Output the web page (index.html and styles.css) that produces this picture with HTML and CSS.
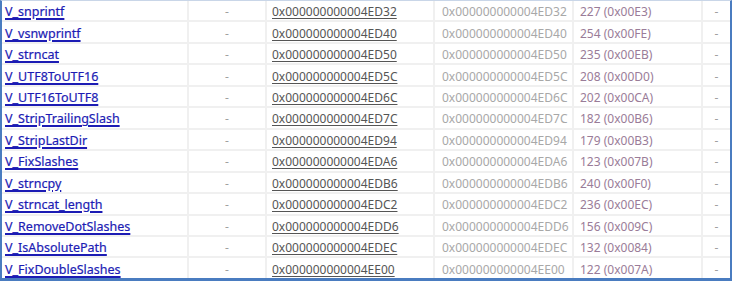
FILE: index.html
```html
<!DOCTYPE html>
<html>
<head>
<meta charset="utf-8">
<link rel="stylesheet" href="styles.css">
</head>
<body>
<div class="frame">
<table class="grid">
<colgroup><col class="c1"><col class="c2"><col class="c3"><col class="c4"><col class="c5"><col class="c6"></colgroup>
<tbody>
<tr><td><a class="fn">V_snprintf</a></td><td class="dash">-</td><td><a class="addr">0x000000000004ED32</a></td><td class="off">0x000000000004ED32</td><td class="size">227 (0x00E3)</td><td class="dash">-</td></tr>
<tr><td><a class="fn">V_vsnwprintf</a></td><td class="dash">-</td><td><a class="addr">0x000000000004ED40</a></td><td class="off">0x000000000004ED40</td><td class="size">254 (0x00FE)</td><td class="dash">-</td></tr>
<tr><td><a class="fn">V_strncat</a></td><td class="dash">-</td><td><a class="addr">0x000000000004ED50</a></td><td class="off">0x000000000004ED50</td><td class="size">235 (0x00EB)</td><td class="dash">-</td></tr>
<tr><td><a class="fn">V_UTF8ToUTF16</a></td><td class="dash">-</td><td><a class="addr">0x000000000004ED5C</a></td><td class="off">0x000000000004ED5C</td><td class="size">208 (0x00D0)</td><td class="dash">-</td></tr>
<tr><td><a class="fn">V_UTF16ToUTF8</a></td><td class="dash">-</td><td><a class="addr">0x000000000004ED6C</a></td><td class="off">0x000000000004ED6C</td><td class="size">202 (0x00CA)</td><td class="dash">-</td></tr>
<tr><td><a class="fn">V_StripTrailingSlash</a></td><td class="dash">-</td><td><a class="addr">0x000000000004ED7C</a></td><td class="off">0x000000000004ED7C</td><td class="size">182 (0x00B6)</td><td class="dash">-</td></tr>
<tr><td><a class="fn">V_StripLastDir</a></td><td class="dash">-</td><td><a class="addr">0x000000000004ED94</a></td><td class="off">0x000000000004ED94</td><td class="size">179 (0x00B3)</td><td class="dash">-</td></tr>
<tr><td><a class="fn">V_FixSlashes</a></td><td class="dash">-</td><td><a class="addr">0x000000000004EDA6</a></td><td class="off">0x000000000004EDA6</td><td class="size">123 (0x007B)</td><td class="dash">-</td></tr>
<tr><td><a class="fn">V_strncpy</a></td><td class="dash">-</td><td><a class="addr">0x000000000004EDB6</a></td><td class="off">0x000000000004EDB6</td><td class="size">240 (0x00F0)</td><td class="dash">-</td></tr>
<tr><td><a class="fn">V_strncat_length</a></td><td class="dash">-</td><td><a class="addr">0x000000000004EDC2</a></td><td class="off">0x000000000004EDC2</td><td class="size">236 (0x00EC)</td><td class="dash">-</td></tr>
<tr><td><a class="fn">V_RemoveDotSlashes</a></td><td class="dash">-</td><td><a class="addr">0x000000000004EDD6</a></td><td class="off">0x000000000004EDD6</td><td class="size">156 (0x009C)</td><td class="dash">-</td></tr>
<tr><td><a class="fn">V_IsAbsolutePath</a></td><td class="dash">-</td><td><a class="addr">0x000000000004EDEC</a></td><td class="off">0x000000000004EDEC</td><td class="size">132 (0x0084)</td><td class="dash">-</td></tr>
<tr><td><a class="fn">V_FixDoubleSlashes</a></td><td class="dash">-</td><td><a class="addr">0x000000000004EE00</a></td><td class="off">0x000000000004EE00</td><td class="size">122 (0x007A)</td><td class="dash">-</td></tr>
</tbody>
</table>
</div>
</body>
</html>
```
FILE: styles.css
```css
html, body {
  margin: 0;
  padding: 0;
  background: #ffffff;
}
.frame {
  width: 732px;
  height: 281px;
  box-sizing: border-box;
  border-top: 1px solid #c9d6e8;
  border-left: 2px solid #4a7cc0;
  border-right: 2px solid #4a7cc0;
  border-bottom: 3px solid #4a7cc0;
  overflow: hidden;
}
.grid {
  width: 728px;
  height: 277px;
  border-collapse: collapse;
  table-layout: fixed;
  font-family: "Noto Sans", "Open Sans", sans-serif;
  font-size: 12px;
}
.c1 { width: 186px; }
.c2 { width: 78px; }
.c3 { width: 168px; }
.c4 { width: 139px; }
.c5 { width: 129px; }
.c6 { width: 28px; }
.grid td {
  border-right: 2px solid #f0f0f0;
  border-bottom: 2px solid #f0f0f0;
  padding: 3px 0 0 5px;
  white-space: nowrap;
  overflow: hidden;
  line-height: 16px;
}
.grid td:last-child { border-right: none; }
.grid tr:last-child td { border-bottom: none; }
.grid td:first-child { padding-left: 3px; }
.fn {
  color: #1c1cb4;
  font-size: 12.5px;
  text-decoration: underline;
  text-decoration-thickness: 1.5px;
  text-underline-offset: 2px;
  -webkit-text-stroke: 0.2px #1c1cb4;
}
.addr {
  color: #555555;
  text-decoration: underline;
  text-underline-offset: 2px;
}
.off { color: #a8a8a8; }
.grid td.off { padding-left: 7px; }
.size { color: #9a7c98; }
.grid td.size { padding-left: 6px; }
.grid td.dash {
  color: #a0a0a0;
  text-align: center;
  padding-left: 0;
}
```
